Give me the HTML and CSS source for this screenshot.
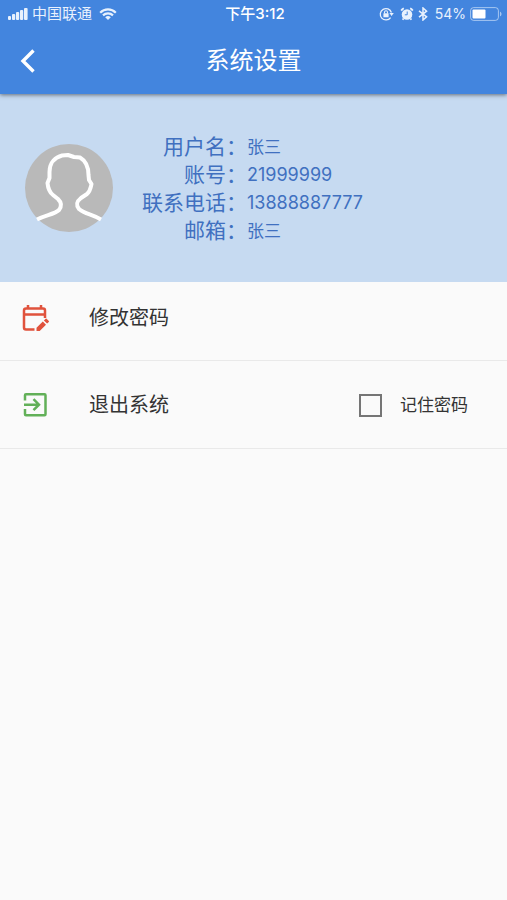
FILE: index.html
```html
<!DOCTYPE html>
<html lang="zh-CN">
<head>
<meta charset="utf-8">
<meta name="viewport" content="width=device-width, initial-scale=1">
<title>系统设置</title>
<link rel="stylesheet" href="styles.css">
</head>
<body>
<header class="top">
  <div class="status">
    <div class="status-side">
      <svg class="signal" width="20" height="12" viewBox="0 0 20 12" fill="currentColor" aria-hidden="true">
        <rect x="0" y="8" width="3" height="4" rx="1"/><rect x="4" y="6" width="3.200" height="6" rx="1"/><rect x="8" y="4" width="3.200" height="8" rx="1"/><rect x="12" y="2" width="3.200" height="10" rx="1"/><rect x="16" y="0" width="3.600" height="12" rx="1"/>
      </svg>
      <span class="carrier">中国联通</span>
      <svg class="wifi" width="18" height="12" viewBox="0 0 18 12" aria-hidden="true">
        <path d="M1.200 4.700a11 11 0 0 1 15.600 0M4 7.400a7.200 7.200 0 0 1 10 0" fill="none" stroke="currentColor" stroke-width="2.200"/>
        <path d="M6.200 9.300a4 4 0 0 1 5.600 0L9 12z" fill="currentColor"/>
      </svg>
    </div>
    <time class="clock">下午3:12</time>
    <div class="status-side status-end">
      <svg width="15" height="14" viewBox="0 0 15 14" aria-hidden="true">
        <path d="M11.600 10.600A5.700 5.700 0 1 1 12.400 5.500" fill="none" stroke="currentColor" stroke-width="1.300"/>
        <path d="M10.400 6h4.400l-2.200 3z" fill="currentColor"/>
        <rect x="4.400" y="6.200" width="5.200" height="4" rx=".5" fill="currentColor"/>
        <path d="M5.500 6.400V5.200a1.500 1.500 0 0 1 3 0v1.200" fill="none" stroke="currentColor" stroke-width="1.100"/>
      </svg>
      <svg class="alarm" width="14" height="14" viewBox="0 0 14 14" aria-hidden="true">
        <circle cx="7" cy="7.500" r="5.300" fill="currentColor"/>
        <path d="M1.200 3.600a8 8 0 0 1 2.600-2.300M12.800 3.600a8 8 0 0 0-2.600-2.300M3.600 11.500l-1 1.300M10.400 11.500l1 1.300" stroke="currentColor" stroke-width="1.800" fill="none"/>
        <path d="M7.200 4.500v3.300H4.800" stroke="#4385de" stroke-width="1" fill="none"/>
      </svg>
      <svg width="10" height="14" viewBox="0 0 10 14" aria-hidden="true">
        <path d="M1 3.800l7.600 6L5 13V1l3.600 3.200L1 10.200" fill="none" stroke="currentColor" stroke-width="1.500"/>
      </svg>
      <span class="percent">54%</span>
      <svg width="32" height="14" viewBox="0 0 32 14" aria-hidden="true">
        <rect x=".6" y=".6" width="27.800" height="12.800" rx="3" fill="none" stroke="currentColor" stroke-opacity=".6"/>
        <rect x="2.500" y="2.500" width="13" height="9" rx="1" fill="#fff"/>
        <path d="M30 4.700c2 .7 2 3.900 0 4.600z" fill="currentColor" opacity=".6"/>
      </svg>
    </div>
  </div>
  <div class="bar">
    <button class="back" type="button" aria-label="返回">
      <svg width="16" height="26" viewBox="0 0 16 26" aria-hidden="true"><path d="M13.500 2.500L3 13l10.500 10.500" fill="none" stroke="currentColor" stroke-width="3.400"/></svg>
    </button>
    <h1 class="title">系统设置</h1>
  </div>
</header>
<main>
  <section class="profile">
    <svg class="avatar" width="88" height="88" viewBox="0 0 88 88" aria-hidden="true">
      <circle cx="44" cy="44" r="44" fill="#b9b9b9"/>
      <path d="M12 75.500C21 71 30 70 34 66C37 62 36 58 33 55L28 51C24 48 23 44 22.500 39L24.500 34V28C24.500 18 31 13 37 11.500L43 11L49 13L55 13.500C61 17 63.500 23 63.500 31L64 36L66.500 40C65.500 44 65.500 47 62 50L56 54C51 58 51 61 54 65C60 70 66 70 76 75.500" fill="none" stroke="#fff" stroke-width="4" stroke-linejoin="round"/>
    </svg>
    <dl class="info">
      <dt>用户名：</dt><dd>张三</dd>
      <dt>账号：</dt><dd class="number">21999999</dd>
      <dt>联系电话：</dt><dd class="number">13888887777</dd>
      <dt>邮箱：</dt><dd>张三</dd>
    </dl>
  </section>
  <div class="row row-first">
    <button class="action" type="button">
      <svg class="icon" width="28" height="28" viewBox="0 0 28 28" aria-hidden="true">
        <path d="M24 14V6.500a2 2 0 0 0-2-2H5a2 2 0 0 0-2 2V23.500a2 2 0 0 0 2 2h8.500M3 10.500h21M7 1v4M20 1v4" fill="none" stroke="#e0523c" stroke-width="2.500"/>
        <path d="M15.500 27v-3.200l6.300-6.300 3.200 3.200-6.300 6.300zM22.900 16.400l1.700-1.700q.5-.5 1 0l2.200 2.200q.5.500 0 1l-1.700 1.700z" fill="#e0523c"/>
      </svg>
      <span>修改密码</span>
    </button>
  </div>
  <div class="row">
    <button class="action" type="button">
      <svg class="icon" width="28" height="28" viewBox="0 0 28 28" aria-hidden="true">
        <path d="M4 9.500V4.200a1 1 0 0 1 1-1h18.500a1 1 0 0 1 1 1v19a1 1 0 0 1-1 1H5a1 1 0 0 1-1-1V18M3 13.700h15M12.500 8.200L18 13.700l-5.500 5.500" fill="none" stroke="#62b058" stroke-width="2.500"/>
      </svg>
      <span>退出系统</span>
    </button>
    <label class="remember" for="remember"><input class="box" type="checkbox" id="remember">记住密码</label>
  </div>
</main>
</body>
</html>
```
FILE: styles.css
```css
* {
  box-sizing: border-box;
}

body {
  margin: 0;
  min-height: 100vh;
  background: #fafafa;
  color: #333;
  font-family: Inter, "Noto Sans CJK SC", sans-serif;
}

button {
  padding: 0;
  border: 0;
  background: none;
  color: inherit;
  font: inherit;
}

svg {
  display: block;
  flex: none;
}

.top {
  position: relative;
  background: #4385de;
  color: #fff;
  box-shadow: 0 1px 4px rgba(0, 0, 0, 0.5);
}

.status {
  display: grid;
  grid-template-columns: 1fr auto 1fr;
  align-items: center;
  height: 28px;
  padding: 0 5px 0 8px;
  font-size: 15px;
  line-height: 20px;
}

.status-side {
  display: flex;
  align-items: center;
  gap: 4px;
  color: #e8f1fd;
}

.wifi {
  margin-left: 3px;
}

.status-end {
  justify-content: flex-end;
}

.alarm {
  margin-left: 2px;
}

.clock {
  font-weight: 500;
}

.percent {
  margin-left: 3px;
  font-size: 14px;
}

.bar {
  display: grid;
  grid-template-columns: 56px 1fr 56px;
  align-items: center;
  height: 66px;
}

.back {
  display: grid;
  place-items: center;
  height: 60px;
}

.title {
  margin: 0;
  font-size: 24px;
  font-weight: 400;
  line-height: 32px;
  text-align: center;
}

.profile {
  display: flex;
  align-items: center;
  gap: 29px;
  height: 188px;
  padding: 0 25px;
  background: #c6daf1;
  color: #4070c0;
}

.info {
  display: grid;
  grid-template-columns: auto auto;
  margin: 0;
  padding-top: 2px;
  line-height: 28px;
}

.info dt {
  font-size: 21px;
  text-align: right;
}

.info dd {
  margin: 0;
  font-size: 17px;
}

.info .number {
  font-size: 18px;
}

.row {
  display: flex;
  align-items: center;
  justify-content: space-between;
  height: 88px;
  padding: 1px 39px 0 21px;
  border-bottom: 1px solid #e9e9e9;
}

.row-first {
  height: 79px;
  padding-bottom: 8px;
}

.action {
  display: flex;
  align-items: center;
  gap: 40px;
  font-size: 20px;
  line-height: 28px;
}

.remember {
  display: flex;
  align-items: center;
  gap: 18px;
  font-size: 17px;
  line-height: 24px;
}

.box {
  appearance: none;
  width: 23px;
  height: 23px;
  margin: 0;
  border: 2px solid #757575;
}

.box:checked {
  background: #4385de;
}
```
